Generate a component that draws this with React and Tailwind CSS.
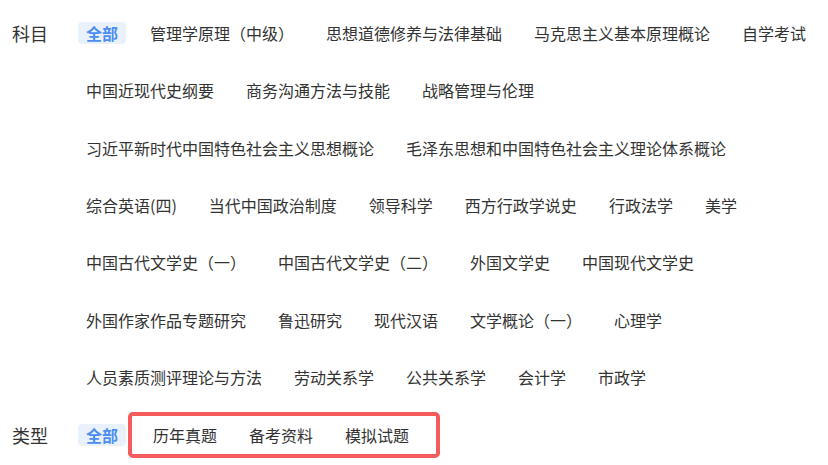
import React from 'react';

const subjects = [
  '管理学原理（中级）',
  '思想道德修养与法律基础',
  '马克思主义基本原理概论',
  '自学考试',
  '中国近现代史纲要',
  '商务沟通方法与技能',
  '战略管理与伦理',
  '习近平新时代中国特色社会主义思想概论',
  '毛泽东思想和中国特色社会主义理论体系概论',
  '综合英语(四)',
  '当代中国政治制度',
  '领导科学',
  '西方行政学说史',
  '行政法学',
  '美学',
  '中国古代文学史（一）',
  '中国古代文学史（二）',
  '外国文学史',
  '中国现代文学史',
  '外国作家作品专题研究',
  '鲁迅研究',
  '现代汉语',
  '文学概论（一）',
  '心理学',
  '人员素质测评理论与方法',
  '劳动关系学',
  '公共关系学',
  '会计学',
  '市政学',
];

const types = ['历年真题', '备考资料', '模拟试题'];

function AllBadge() {
  return (
    <span className="h-[22px] my-px px-2 rounded-[4px] bg-[#e9f1fd] text-[#4b8ef0] font-bold text-[16px] leading-[22px] cursor-pointer">
      全部
    </span>
  );
}

function Item({ label }) {
  return (
    <span className="h-[24px] px-2 text-[16px] leading-[24px] text-[#333] whitespace-nowrap cursor-pointer hover:text-[#4b8ef0]">
      {label}
    </span>
  );
}

export default function App() {
  return (
    <div
      className="w-[828px] h-[465px] bg-white pl-3 pt-[21px] text-[#333]"
      style={{ fontFamily: '"Noto Sans CJK SC", "Noto Sans", sans-serif' }}
    >
      {/* 科目 */}
      <div className="flex items-start">
        <div className="w-[66px] shrink-0 h-[24px] leading-[24px] text-[18px]">科目</div>
        <div className="flex-1 flex flex-wrap items-center gap-x-4 gap-y-[33.33px] pr-[10px]">
          <AllBadge />
          {subjects.map((s) => (
            <Item key={s} label={s} />
          ))}
        </div>
      </div>

      {/* 类型 */}
      <div className="flex items-center mt-[23px]">
        <div className="w-[66px] shrink-0 text-[18px] leading-[24px]">类型</div>
        <AllBadge />
        <div className="ml-[2px] flex items-center gap-x-4 border-4 border-[#f45b5b] rounded-[5px] pl-[13px] pr-[19px] py-[7px]">
          {types.map((t) => (
            <Item key={t} label={t} />
          ))}
        </div>
      </div>
    </div>
  );
}
